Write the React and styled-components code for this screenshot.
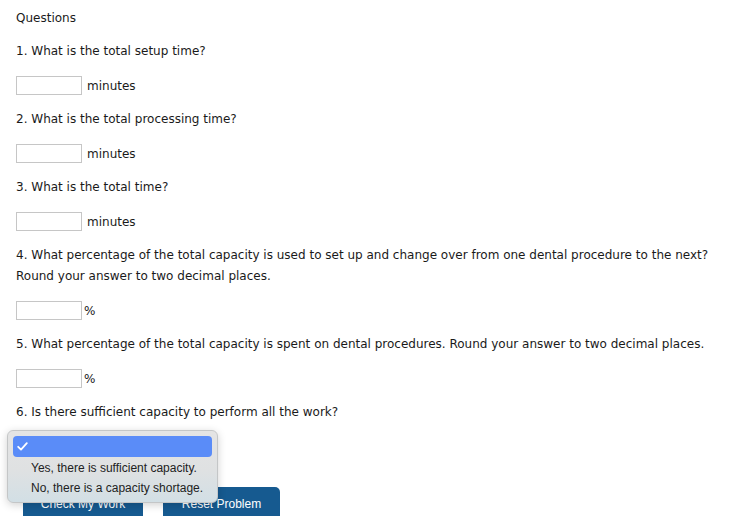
import styled, { createGlobalStyle } from 'styled-components';

const GlobalStyle = createGlobalStyle`
  body {
    margin: 0;
    background: #ffffff;
    font-family: "DejaVu Sans", Verdana, sans-serif;
    color: #1a1a1a;
  }
`;

const questions = [
  { id: 1, text: '1. What is the total setup time?', unit: 'minutes' },
  { id: 2, text: '2. What is the total processing time?', unit: 'minutes' },
  { id: 3, text: '3. What is the total time?', unit: 'minutes' },
  {
    id: 4,
    text: '4. What percentage of the total capacity is used to set up and change over from one dental procedure to the next? Round your answer to two decimal places.',
    unit: '%',
  },
  {
    id: 5,
    text: '5. What percentage of the total capacity is spent on dental procedures. Round your answer to two decimal places.',
    unit: '%',
  },
];

const options = [
  'Yes, there is sufficient capacity.',
  'No, there is a capacity shortage.',
];

function App() {
  return (
    <>
      <GlobalStyle />
      <Page>
        <Heading>Questions</Heading>
        {questions.map((q) => (
          <Block key={q.id}>
            <Text>{q.text}</Text>
            <AnswerRow>
              <AnswerInput type="text" />
              <Unit $tight={q.unit === '%'}>{q.unit}</Unit>
            </AnswerRow>
          </Block>
        ))}
        <Block>
          <Text>6. Is there sufficient capacity to perform all the work?</Text>
          <SelectRow>
            <FakeSelect />
            <Popup>
              <Highlight>
                <svg width="11" height="9" viewBox="0 0 11 9">
                  <path
                    d="M1.2 4.8 L4 7.6 L9.8 1.2"
                    fill="none"
                    stroke="#ffffff"
                    strokeWidth="1.8"
                    strokeLinecap="round"
                    strokeLinejoin="round"
                  />
                </svg>
              </Highlight>
              {options.map((o) => (
                <Option key={o}>{o}</Option>
              ))}
            </Popup>
          </SelectRow>
        </Block>
        <Buttons>
          <Button $w={120}>Check My Work</Button>
          <Button $w={117}>Reset Problem</Button>
        </Buttons>
      </Page>
    </>
  );
}

export default App;

const Page = styled.div`
  padding: 8px 16px 0;
  display: flex;
  flex-direction: column;
  height: 516px;
  box-sizing: border-box;
  overflow: hidden;
`;

const Heading = styled.div`
  font-size: 12px;
  line-height: 21px;
  margin-bottom: 12px;
`;

const Block = styled.div`
  display: flex;
  flex-direction: column;
  gap: 13px;
  margin-bottom: 13px;
`;

const Text = styled.div`
  font-size: 12px;
  line-height: 21px;
  max-width: 700px;
`;

const AnswerRow = styled.div`
  display: flex;
  align-items: center;
  height: 21px;
`;

const AnswerInput = styled.input`
  width: 66px;
  height: 19px;
  box-sizing: border-box;
  border: 1px solid #c6c6c6;
  border-radius: 0;
  padding: 0 3px;
  margin: 0;
`;

const Unit = styled.span`
  font-size: 12px;
  margin-left: ${(p) => (p.$tight ? '2px' : '5px')};
`;

const SelectRow = styled.div`
  position: relative;
  height: 22px;
`;

const FakeSelect = styled.div`
  width: 200px;
  height: 20px;
  border: 1px solid #c6c6c6;
  border-radius: 4px;
  background: #ffffff;
`;

const Popup = styled.div`
  position: absolute;
  left: -9px;
  top: -6px;
  width: 211px;
  height: 73px;
  box-sizing: border-box;
  padding: 5px 5px 0;
  border: 1px solid #c4c6c7;
  border-radius: 6px;
  background: linear-gradient(#e4e4e4 0%, #dfe1e2 55%, #d2dfe5 100%);
  box-shadow: 0 2px 8px rgba(0, 0, 0, 0.18);
  font-family: "Liberation Sans", Arial, sans-serif;
  font-size: 12px;
  color: #222;
  z-index: 2;
`;

const Highlight = styled.div`
  height: 21px;
  border-radius: 4px;
  background: #5a8cf8;
  display: flex;
  align-items: center;
  padding-left: 4px;
  margin-bottom: 1px;
`;

const Option = styled.div`
  height: 20px;
  line-height: 20px;
  padding-left: 18px;
`;

const Buttons = styled.div`
  display: flex;
  gap: 20px;
  padding-left: 7px;
  margin-top: 16px;
`;

const Button = styled.button`
  width: ${(p) => p.$w}px;
  height: 34px;
  border: none;
  border-radius: 5px;
  background: #165a90;
  color: #ffffff;
  font-family: "Liberation Sans", Arial, sans-serif;
  font-size: 12px;
  padding: 0;
  flex-shrink: 0;
`;
